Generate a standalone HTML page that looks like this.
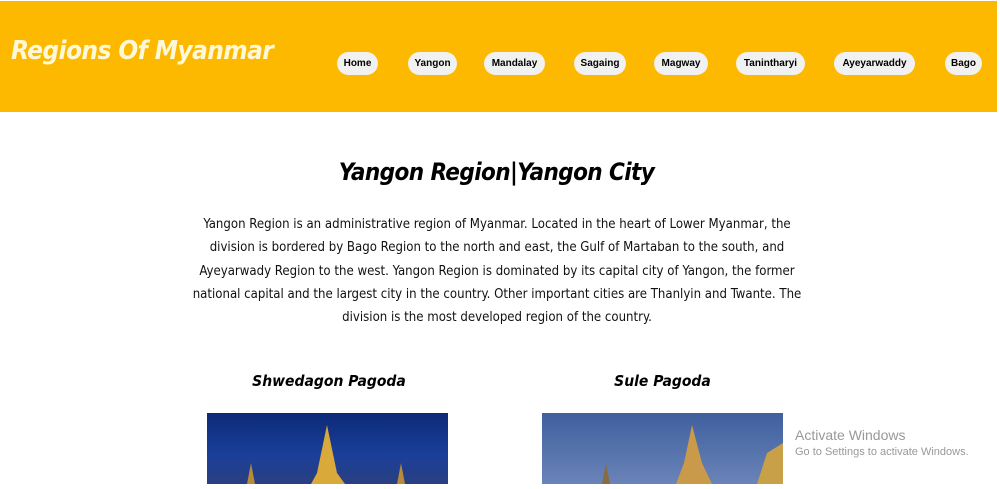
<!DOCTYPE html>
<html><head><style>
body{margin:0;width:1000px;height:484px;overflow:hidden;background:#fff;font-family:"Liberation Sans",sans-serif;position:relative}
.hdr{position:absolute;left:0;top:1px;width:997px;height:111px;background:#fdb900}
.title{position:absolute;left:11px;top:36px;font-size:26px;font-style:italic;font-weight:bold;color:#fff8d8;font-family:"DejaVu Sans Condensed","Liberation Sans",sans-serif;letter-spacing:-0.6px}
.nav{position:absolute;top:52px;height:23px;line-height:24px;background:#f1f1f1;border-radius:12px;font-size:10px;font-weight:bold;text-align:center;color:#000}
h1{position:absolute;top:158px;left:0;width:993px;text-align:center;margin:0;font-size:24px;font-style:italic;font-weight:bold;font-family:"DejaVu Sans Condensed",sans-serif;letter-spacing:-0.6px}
p{position:absolute;top:213px;left:187px;width:620px;margin:0;text-align:center;font-size:13.1px;line-height:23.3px;color:#111;font-family:"DejaVu Sans Condensed","Liberation Sans",sans-serif}
h2{position:absolute;top:372px;margin:0;font-size:15.5px;font-style:italic;font-weight:bold;font-family:"DejaVu Sans Condensed",sans-serif;text-align:center}
.img{position:absolute;top:413px;width:241px;height:71px}
.aw{position:absolute;left:795px;color:#999;font-family:"Liberation Sans",sans-serif}
</style></head><body>
<div class="hdr"></div>
<div class="title">Regions Of Myanmar</div>
<div class="nav" style="left:337px;width:41px">Home</div>
<div class="nav" style="left:408px;width:49px">Yangon</div>
<div class="nav" style="left:484px;width:61px">Mandalay</div>
<div class="nav" style="left:574px;width:52px">Sagaing</div>
<div class="nav" style="left:654px;width:54px">Magway</div>
<div class="nav" style="left:736px;width:69px">Tanintharyi</div>
<div class="nav" style="left:834px;width:81px">Ayeyarwaddy</div>
<div class="nav" style="left:945px;width:37px">Bago</div>
<h1>Yangon Region|Yangon City</h1>
<p>Yangon Region is an administrative region of Myanmar. Located in the heart of Lower Myanmar, the<br>division is bordered by Bago Region to the north and east, the Gulf of Martaban to the south, and<br>Ayeyarwady Region to the west. Yangon Region is dominated by its capital city of Yangon, the former<br>national capital and the largest city in the country. Other important cities are Thanlyin and Twante. The<br>division is the most developed region of the country.</p>
<h2 style="left:207px;width:244px">Shwedagon Pagoda</h2>
<h2 style="left:542px;width:241px">Sule Pagoda</h2>
<div class="img" style="left:207px;background:linear-gradient(#0d2a78,#1a3f9a 60%,#2a3f80)">
<svg width="241" height="71"><polygon points="120,12 110,60 104,71 138,71 130,60" fill="#d9a93a"/><polygon points="44,50 40,71 48,71" fill="#b88a3a"/><polygon points="194,50 190,71 198,71" fill="#b88a3a"/></svg></div>
<div class="img" style="left:542px;background:linear-gradient(#3f5f9e,#6a84b8)">
<svg width="241" height="71"><polygon points="150,12 142,50 134,71 170,71 160,50" fill="#c89a4a"/><polygon points="225,40 215,71 241,71 241,30" fill="#c8a048"/><polygon points="64,50 60,71 68,71" fill="#8a6a40"/></svg></div>
<div class="aw" style="top:427px;font-size:14px">Activate Windows</div>
<div class="aw" style="top:446px;font-size:11px">Go to Settings to activate Windows.</div>
</body></html>
